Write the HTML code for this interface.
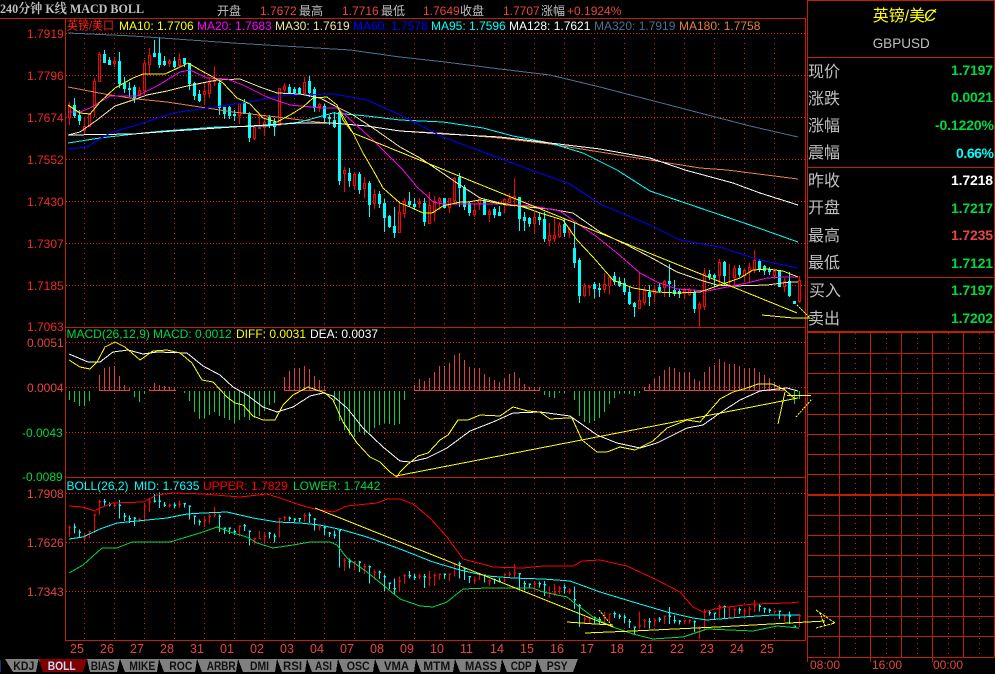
<!DOCTYPE html>
<html lang="zh">
<head>
<meta charset="utf-8">
<title>GBPUSD</title>
<style>
html,body{margin:0;padding:0;background:#000;width:995px;height:674px;overflow:hidden}
svg{display:block}
text{font-family:"Liberation Sans","Noto Sans CJK SC",sans-serif;font-size:12px}
.l{fill:none;stroke-width:1}
.cn{font-size:16px;fill:#c0c0c0;font-family:"Noto Sans CJK SC","WenQuanYi Zen Hei",sans-serif}
.v{font-size:14px;font-weight:bold}
.r{fill:#e84444}
.g{fill:#c0c0c0}
.gr{fill:#00d840}
.t{font-weight:bold;fill:#101010}
.ax{fill:#e84444;font-size:12.5px}
</style>
</head>
<body>
<svg width="995" height="674" viewBox="0 0 995 674" shape-rendering="crispEdges">
<defs>
<path id="rw" vector-effect="non-scaling-stroke" d="M69.5 102V125M84.5 117V133M89.5 113V127M94.5 78V117M99.5 52V81M114.5 57V67M139.5 87V95M144.5 60V95M149.5 48V75M169.5 59V67M179.5 53V67M204.5 83V105M209.5 78V98M214.5 66V86M239.5 103V124M254.5 126V140M259.5 113V128M264.5 115V136M279.5 88V126M284.5 83V93M304.5 77V95M319.5 103V112M344.5 167V192M354.5 172V190M364.5 177V198M374.5 189V209M399.5 203V233M404.5 198V218M419.5 198V208M429.5 192V223M434.5 196V222M439.5 197V210M449.5 198V213M454.5 177V203M474.5 203V217M479.5 199V210M489.5 209V222M504.5 198V214M509.5 193V203M514.5 178V207M534.5 212V233M549.5 223V246M554.5 217V242M559.5 222V238M569.5 227V238M584.5 283V297M589.5 285V296M604.5 273V293M609.5 277V295M639.5 272V308M644.5 287V305M654.5 285V302M664.5 280V297M684.5 289V298M689.5 288V296M699.5 302V327M704.5 268V310M719.5 259V285M729.5 264V285M734.5 265V285M744.5 268V282M749.5 263V282M754.5 250V273M774.5 270V277M784.5 278V292M799.5 276V303"/>
<path id="rb" vector-effect="non-scaling-stroke" d="M68.5 106.5h2V117.5h-2zM83.5 126.5h2V130.5h-2zM88.5 114.5h2V126.5h-2zM93.5 81.5h2V107.5h-2zM98.5 54.5h2V81.5h-2zM113.5 61.5h2V63.5h-2zM138.5 90.5h2V95.5h-2zM143.5 63.5h2V90.5h-2zM148.5 55.5h2V64.5h-2zM168.5 61.5h2V63.5h-2zM178.5 59.5h2V65.5h-2zM203.5 91.5h2V94.5h-2zM208.5 83.5h2V93.5h-2zM213.5 80.5h2V81.5h-2zM238.5 103.5h2V115.5h-2zM253.5 127.5h2V138.5h-2zM258.5 127.5h2V128.5h-2zM263.5 122.5h2V127.5h-2zM278.5 88.5h2V125.5h-2zM283.5 86.5h2V89.5h-2zM303.5 82.5h2V93.5h-2zM318.5 104.5h2V106.5h-2zM343.5 170.5h2V173.5h-2zM353.5 174.5h2V185.5h-2zM363.5 183.5h2V188.5h-2zM373.5 194.5h2V203.5h-2zM398.5 212.5h2V232.5h-2zM403.5 201.5h2V213.5h-2zM418.5 202.5h2V203.5h-2zM428.5 205.5h2V223.5h-2zM433.5 201.5h2V212.5h-2zM438.5 198.5h2V201.5h-2zM448.5 198.5h2V207.5h-2zM453.5 178.5h2V200.5h-2zM473.5 210.5h2V214.5h-2zM478.5 199.5h2V203.5h-2zM488.5 211.5h2V214.5h-2zM503.5 199.5h2V204.5h-2zM508.5 198.5h2V202.5h-2zM513.5 196.5h2V198.5h-2zM533.5 217.5h2V223.5h-2zM548.5 235.5h2V240.5h-2zM553.5 235.5h2V238.5h-2zM558.5 225.5h2V236.5h-2zM568.5 229.5h2V232.5h-2zM583.5 286.5h2V295.5h-2zM588.5 286.5h2V287.5h-2zM603.5 284.5h2V289.5h-2zM608.5 277.5h2V285.5h-2zM638.5 300.5h2V308.5h-2zM643.5 290.5h2V302.5h-2zM653.5 289.5h2V293.5h-2zM663.5 281.5h2V287.5h-2zM683.5 290.5h2V293.5h-2zM688.5 289.5h2V294.5h-2zM698.5 304.5h2V308.5h-2zM703.5 273.5h2V306.5h-2zM718.5 262.5h2V275.5h-2zM728.5 285.5h2V286.5h-2zM733.5 268.5h2V277.5h-2zM743.5 270.5h2V275.5h-2zM748.5 267.5h2V271.5h-2zM753.5 260.5h2V269.5h-2zM773.5 271.5h2V275.5h-2zM783.5 281.5h2V286.5h-2zM798.5 280.5h2V301.5h-2z"/>
<path id="cw" vector-effect="non-scaling-stroke" d="M74.5 98V118M79.5 110V125M104.5 50V63M109.5 57V65M119.5 52V88M124.5 77V93M129.5 82V97M134.5 85V103M154.5 40V57M159.5 37V68M164.5 56V66M174.5 57V68M184.5 58V67M189.5 63V90M194.5 82V100M199.5 90V102M219.5 80V115M224.5 107V119M229.5 106V119M234.5 110V121M244.5 99V113M249.5 112V142M269.5 115V128M274.5 118V136M289.5 84V93M294.5 87V95M299.5 87V95M309.5 76V97M314.5 87V112M324.5 104V122M329.5 115V125M334.5 112V128M339.5 111V185M349.5 168V187M359.5 172V194M369.5 181V217M379.5 191V208M384.5 199V232M389.5 215V228M394.5 207V238M409.5 192V207M414.5 198V210M424.5 198V226M444.5 198V208M459.5 173V207M464.5 185V210M469.5 202V216M484.5 199V215M494.5 207V218M499.5 206V215M519.5 197V231M524.5 212V231M529.5 217V227M539.5 213V225M544.5 212V242M564.5 219V237M574.5 223V268M579.5 258V303M594.5 282V298M599.5 283V297M614.5 272V285M619.5 277V287M624.5 278V295M629.5 287V305M634.5 302V317M649.5 285V306M659.5 283V293M669.5 264V297M674.5 280V296M679.5 289V298M694.5 290V313M709.5 270V280M714.5 274V287M724.5 261V285M739.5 265V277M759.5 259V272M764.5 265V275M769.5 267V275M779.5 270V287M789.5 272V297"/>
<path id="cb" vector-effect="non-scaling-stroke" d="M73.5 105.5h2V115.5h-2zM78.5 115.5h2V120.5h-2zM103.5 54.5h2V62.5h-2zM108.5 60.5h2V64.5h-2zM118.5 61.5h2V83.5h-2zM123.5 83.5h2V88.5h-2zM128.5 88.5h2V89.5h-2zM133.5 87.5h2V97.5h-2zM153.5 53.5h2V56.5h-2zM158.5 53.5h2V64.5h-2zM163.5 61.5h2V64.5h-2zM173.5 61.5h2V66.5h-2zM183.5 58.5h2V63.5h-2zM188.5 63.5h2V83.5h-2zM193.5 83.5h2V95.5h-2zM198.5 94.5h2V100.5h-2zM218.5 83.5h2V107.5h-2zM223.5 107.5h2V113.5h-2zM228.5 107.5h2V115.5h-2zM233.5 114.5h2V115.5h-2zM243.5 102.5h2V113.5h-2zM248.5 113.5h2V137.5h-2zM268.5 117.5h2V124.5h-2zM273.5 122.5h2V126.5h-2zM288.5 87.5h2V92.5h-2zM293.5 89.5h2V92.5h-2zM298.5 88.5h2V93.5h-2zM308.5 81.5h2V92.5h-2zM313.5 89.5h2V107.5h-2zM323.5 106.5h2V117.5h-2zM328.5 117.5h2V118.5h-2zM333.5 120.5h2V126.5h-2zM338.5 112.5h2V180.5h-2zM348.5 173.5h2V180.5h-2zM358.5 174.5h2V189.5h-2zM368.5 183.5h2V204.5h-2zM378.5 194.5h2V203.5h-2zM383.5 203.5h2V217.5h-2zM388.5 216.5h2V226.5h-2zM393.5 226.5h2V232.5h-2zM408.5 201.5h2V204.5h-2zM413.5 204.5h2V206.5h-2zM423.5 203.5h2V221.5h-2zM443.5 198.5h2V207.5h-2zM458.5 177.5h2V187.5h-2zM463.5 187.5h2V206.5h-2zM468.5 203.5h2V212.5h-2zM483.5 200.5h2V214.5h-2zM493.5 209.5h2V214.5h-2zM498.5 212.5h2V215.5h-2zM518.5 197.5h2V218.5h-2zM523.5 217.5h2V220.5h-2zM528.5 218.5h2V223.5h-2zM538.5 217.5h2V219.5h-2zM543.5 219.5h2V238.5h-2zM563.5 224.5h2V232.5h-2zM573.5 248.5h2V262.5h-2zM578.5 260.5h2V295.5h-2zM593.5 284.5h2V288.5h-2zM598.5 288.5h2V289.5h-2zM613.5 276.5h2V281.5h-2zM618.5 281.5h2V285.5h-2zM623.5 283.5h2V291.5h-2zM628.5 292.5h2V303.5h-2zM633.5 303.5h2V306.5h-2zM648.5 292.5h2V296.5h-2zM658.5 287.5h2V290.5h-2zM668.5 281.5h2V283.5h-2zM673.5 290.5h2V293.5h-2zM678.5 291.5h2V293.5h-2zM693.5 292.5h2V308.5h-2zM708.5 274.5h2V276.5h-2zM713.5 275.5h2V277.5h-2zM723.5 262.5h2V275.5h-2zM738.5 268.5h2V274.5h-2zM758.5 261.5h2V268.5h-2zM763.5 266.5h2V270.5h-2zM768.5 269.5h2V271.5h-2zM778.5 271.5h2V286.5h-2zM788.5 281.5h2V295.5h-2zM793.5 301.5h2V303.5h-2z"/>
</defs>

<!-- grid -->
<path fill="none" stroke="#dc2410" stroke-dasharray="1 4" d="M84.5 33V640M114.5 33V640M144.5 33V640M174.5 33V640M204.5 33V640M234.5 33V640M264.5 33V640M294.5 33V640M324.5 33V640M354.5 33V640M384.5 33V640M414.5 33V640M444.5 33V640M474.5 33V640M504.5 33V640M534.5 33V640M564.5 33V640M594.5 33V640M624.5 33V640M654.5 33V640M684.5 33V640M714.5 33V640M744.5 33V640M774.5 33V640"/>
<path fill="none" stroke="#dc2410" stroke-dasharray="1 2" d="M66 33.5H805M66 75.5H805M66 117.5H805M66 159.5H805M66 201.5H805M66 243.5H805M66 285.5H805M66 342.5H805M66 387.5H805M66 432.5H805M66 493.5H805M66 542.5H805M66 591.5H805"/>
<path fill="none" stroke="#dc2410" stroke-dasharray="1 4" d="M824.5 333V657M855.5 333V657M886.5 333V657M917.5 333V657M948.5 333V657M979.5 333V657"/>

<!-- frames -->
<g fill="none" stroke="#c02000">
<path d="M0 18.5H806M65.5 18V640.5M65 327.5H806M65 477.5H806M65 640.5H806M805.5 18V641"/>
<path d="M807.5 0V657.5M807 .5H995M994.5 0V657.5M808 57.5H994M808 167.5H994M808 277.5H994"/>
<path d="M839.5 333V657M870.5 333V662M901.5 333V657M932.5 333V662M963.5 333V657M807.5 657V662"/>
<path d="M808 353.5H994M808 373.5H994M808 393.5H994M808 414.5H994M808 434.5H994M808 454.5H994M808 474.5H994M808 515.5H994M808 535.5H994M808 555.5H994M808 576.5H994M808 596.5H994M808 616.5H994M808 636.5H994M808 657.5H994"/>
<path stroke-width="2" d="M808 332H994M808 495H994"/>
</g>

<!-- candles main -->
<use href="#rw" fill="none" stroke="#ff0000"/>
<use href="#cw" fill="none" stroke="#00ffff"/>
<use href="#rb" fill="#000" stroke="#ff0000"/>
<use href="#cb" fill="#00ffff" stroke="#00ffff"/>

<!-- MAs -->
<g class="l">
<polyline stroke="#4f6f90" points="68,33 133,36 233,43 300,47 350,50 400,57 445,62 500,69 550,75 600,87 650,100 700,113 750,126 798,137"/>
<polyline stroke="#e88040" points="68,87 110,95 137,99 167,102 200,107 233,112 277,117 317,122 367,126 400,131 440,133 500,138 550,144 600,152 650,160 700,168 727,170 798,179"/>
<polyline stroke="#00ffff" points="68,143 100,138 143,133 163,131 217,127 267,126 300,122 333,113 367,116 400,120 443,122 483,128 513,136 550,143 583,153 617,170 650,191 700,208 750,225 798,242"/>
<polyline stroke="#ffffff" points="68,135 133,134 173,131 233,127 300,123 333,123 367,126 400,131 445,134 500,137 550,143 600,149 650,158 685,170 733,183 760,193 798,205"/>
<polyline stroke="#0000ff" points="68,149 87,147 110,133 143,123 173,113 207,108 243,103 287,95 333,94 367,100 400,115 443,137 531,170 570,184 600,204 650,225 680,240 720,247 760,260 798,268"/>
<polyline stroke="#f0e8a0" points="68,135 80,132 97,120 115,106 133,100 147,95 167,91 187,86 217,80 240,79 260,87 277,93 300,94 320,98 337,107 353,115 373,128 400,147 420,158 438,170 457,183 480,198 500,203 527,207 550,209 573,213 600,232 627,245 650,257 677,272 700,280 717,285 733,286 767,285 790,282 798,282"/>
<polyline stroke="#ff00ff" points="68,112 80,112 90,108 110,96 137,96 157,86 180,72 190,70 207,78 227,79 243,85 267,97 290,105 323,108 337,108 353,122 373,140 403,170 417,187 427,196 433,202 443,204 467,204 500,204 533,206 560,211 577,223 597,237 617,253 640,273 657,282 677,289 693,290 707,291 727,287 747,283 767,278 783,277 798,277"/>
<polyline stroke="#ffff00" points="68,105 80,113 90,114 100,102 115,88 133,78 143,74 165,74 180,67 188,63 200,70 213,77 223,83 237,98 250,104 263,118 277,122 290,115 303,107 313,98 327,97 337,105 343,120 353,133 363,153 373,170 383,188 400,203 410,207 423,213 432,213 443,206 460,202 468,202 480,200 497,203 507,205 520,206 532,210 540,213 563,220 577,240 593,257 613,280 633,288 657,292 677,293 700,292 720,285 740,278 753,270 767,269 783,271 798,277"/>
<polyline stroke="#ffff00" points="338,108 353,133 797,313"/>
<polyline stroke="#ffff00" points="762,315 793,318 810,318"/>
<polyline stroke="#ffff00" stroke-dasharray="2 1" points="797,305 810,318"/>
</g>

<!-- MACD hist -->
<path fill="none" stroke="#e04040" d="M99.5 390V375M104.5 390V368M109.5 390V367M114.5 390V366M119.5 390V376M124.5 390V385M129.5 390V388M149.5 390V389M154.5 390V383M159.5 390V385M164.5 390V386M169.5 390V387M174.5 390V388M284.5 390V377M289.5 390V371M294.5 390V368M299.5 390V368M304.5 390V366M309.5 390V369M314.5 390V376M319.5 390V380M324.5 390V386M414.5 390V385M419.5 390V379M424.5 390V381M429.5 390V378M434.5 390V372M439.5 390V366M444.5 390V366M449.5 390V363M454.5 390V355M459.5 390V353M464.5 390V360M469.5 390V367M474.5 390V368M479.5 390V368M484.5 390V374M489.5 390V377M494.5 390V380M499.5 390V382M504.5 390V378M509.5 390V374M514.5 390V372M519.5 390V378M524.5 390V384M529.5 390V387M534.5 390V387M539.5 390V387M644.5 390V387M649.5 390V384M654.5 390V378M659.5 390V376M664.5 390V370M669.5 390V367M674.5 390V368M679.5 390V372M684.5 390V372M689.5 390V372M694.5 390V379M699.5 390V381M704.5 390V372M709.5 390V367M714.5 390V365M719.5 390V359M724.5 390V362M729.5 390V364M734.5 390V364M739.5 390V366M744.5 390V368M749.5 390V368M754.5 390V368M759.5 390V372M764.5 390V375M769.5 390V378M774.5 390V382M779.5 390V385M784.5 390V387M99 390.5H130M149 390.5H176M284 390.5H326M414 390.5H540M644 390.5H786"/>
<path fill="none" stroke="#00d840" d="M69.5 391V400M74.5 391V402M79.5 391V406M84.5 391V406M89.5 391V401M134.5 391V397M139.5 391V402M144.5 391V394M184.5 391V393M189.5 391V401M194.5 391V412M199.5 391V419M204.5 391V418M209.5 391V415M214.5 391V412M219.5 391V416M224.5 391V418M229.5 391V420M234.5 391V423M239.5 391V420M244.5 391V417M249.5 391V420M254.5 391V418M259.5 391V416M264.5 391V411M269.5 391V405M274.5 391V403M334.5 391V401M339.5 391V421M344.5 391V430M349.5 391V435M354.5 391V437M359.5 391V432M364.5 391V435M369.5 391V433M374.5 391V428M379.5 391V425M384.5 391V423M389.5 391V424M394.5 391V425M399.5 391V424M404.5 391V400M544.5 391V395M549.5 391V397M554.5 391V398M559.5 391V393M564.5 391V393M574.5 391V400M579.5 391V416M584.5 391V422M589.5 391V423M594.5 391V421M599.5 391V418M604.5 391V412M609.5 391V404M614.5 391V398M619.5 391V394M624.5 391V393M629.5 391V394M634.5 391V396M639.5 391V393M794.5 391V404M799.5 391V399"/>
<g class="l">
<polyline stroke="#ffffff" points="69,354 88,362 100,362 113,352 128,350 143,354 157,352 187,353 203,366 220,375 233,387 247,395 263,407 277,412 293,407 310,396 323,393 333,396 347,408 363,428 383,447 400,461 410,462 427,458 447,448 470,431 493,422 513,413 540,412 570,416 597,435 617,443 640,448 657,443 687,428 703,425 720,413 740,400 760,391 787,388 798,391"/>
<polyline stroke="#ffff00" points="69,360 80,367 90,369 97,362 105,347 115,342 125,347 140,360 153,351 167,350 180,353 192,363 202,380 213,382 227,397 235,403 243,405 253,416 263,420 275,420 283,405 293,395 308,387 325,393 333,400 343,422 357,443 370,457 380,462 390,472 397,477 400,472 407,465 418,456 428,453 440,440 448,435 458,420 468,420 480,415 500,416 513,407 528,411 540,412 550,419 567,418 572,418 582,440 597,452 607,452 620,447 635,450 653,441 667,428 687,420 700,422 720,399 733,392 747,388 758,384 772,384 785,390 795,399"/>
<polyline stroke="#ffff00" points="396,476 798,398"/>
<polyline stroke="#ffff00" points="778,424 785,392"/>
<polyline stroke="#ffff00" points="787,395.5 811,395.5"/>
<polyline stroke="#ffff00" stroke-dasharray="2 1" points="796,417 812,399"/>
</g>

<!-- BOLL -->
<g transform="translate(0 473.9) scale(1 .505)">
<use href="#rw" fill="none" stroke="#ff0000"/>
<use href="#cw" fill="none" stroke="#00ffff"/>
<use href="#rb" fill="none" stroke="#ff0000" stroke-dasharray="3 4000"/>
<use href="#cb" fill="none" stroke="#00ffff" stroke-dasharray="3 4000"/>
</g>
<g class="l">
<polyline stroke="#ff0000" points="69,506 83,507 95,511 100,508 113,503 143,502 157,495 173,493 203,494 240,497 267,494 280,498 300,505 315,509 333,512 347,506 377,503 387,499 400,499 413,504 430,518 447,537 463,559 493,567 523,568 543,566 573,566 582,561 600,560 627,566 657,580 680,592 693,607 703,612 720,608 753,604 790,603 799,602"/>
<polyline stroke="#00ffff" points="69,539 83,537 100,529 117,523 137,521 167,518 187,514 203,513 227,512 253,518 277,522 300,523 320,525 343,530 367,537 400,549 433,562 460,570 487,576 513,578 543,579 570,581 600,592 633,602 667,612 693,618 707,620 743,617 773,615 799,615"/>
<polyline stroke="#00d840" points="69,573 83,565 102,548 117,548 132,542 147,542 170,542 190,536 200,533 217,527 233,533 247,537 257,543 273,548 293,545 310,542 330,542 337,545 347,558 367,572 383,585 400,599 420,606 433,607 447,602 463,589 487,588 533,588 543,592 567,597 577,605 593,617 613,627 633,634 653,639 683,637 707,629 753,631 777,626 799,628"/>
<polyline stroke="#ffff00" points="315,508 613,627"/>
<polyline stroke="#ffff00" points="567,622 595,624 613,625"/>
<polyline stroke="#ffff00" stroke-dasharray="2 1" points="599,610 613,627"/>
<polyline stroke="#ffff00" points="585,633 633,631 717,627 825,621"/>
<polyline stroke="#ffff00" stroke-dasharray="3 1" points="816,610 835,623 816,628"/>
<polyline stroke="#ffff00" stroke-dasharray="2 1" points="820,613 825,626"/>
</g>

<!-- tabs -->
<polygon fill="#808080" points="5,659 578,659 573,672 13,672"/>
<polygon fill="#000" points="38.5,659 36,672 44,672"/>
<polygon fill="#800000" points="39,659 87,659 83,672 43,672"/>
<polygon fill="#000" points="120,659 117,672 125,672"/>
<polygon fill="#000" points="87,659 83,672 90,672"/>
<polygon fill="#000" points="159,659 157,672 164,672"/>
<polygon fill="#000" points="197,659 195,672 202,672"/>
<polygon fill="#000" points="238,659 236,672 243,672"/>
<polygon fill="#000" points="277,659 275,672 282,672"/>
<polygon fill="#000" points="307,659 305,672 312,672"/>
<polygon fill="#000" points="338,659 336,672 343,672"/>
<polygon fill="#000" points="375,659 373,672 380,672"/>
<polygon fill="#000" points="416,659 414,672 421,672"/>
<polygon fill="#000" points="455,659 453,672 460,672"/>
<polygon fill="#000" points="502,659 500,672 507,672"/>
<polygon fill="#000" points="537,659 535,672 542,672"/>
<rect x="0" y="660" width="1" height="12" fill="#203060"/>
<text class="t" x="13.3" y="670" textLength="21" lengthAdjust="spacingAndGlyphs">KDJ</text>
<text class="t" x="47.7" y="670" textLength="28" lengthAdjust="spacingAndGlyphs" style="fill:#c4dcff">BOLL</text>
<text class="t" x="90.7" y="670" textLength="24" lengthAdjust="spacingAndGlyphs">BIAS</text>
<text class="t" x="129.3" y="670" textLength="26" lengthAdjust="spacingAndGlyphs">MIKE</text>
<text class="t" x="169.3" y="670" textLength="23" lengthAdjust="spacingAndGlyphs">ROC</text>
<text class="t" x="206.7" y="670" textLength="29" lengthAdjust="spacingAndGlyphs">ARBR</text>
<text class="t" x="250" y="670" textLength="19" lengthAdjust="spacingAndGlyphs">DMI</text>
<text class="t" x="283" y="670" textLength="19" lengthAdjust="spacingAndGlyphs">RSI</text>
<text class="t" x="315" y="670" textLength="17" lengthAdjust="spacingAndGlyphs">ASI</text>
<text class="t" x="346.7" y="670" textLength="23" lengthAdjust="spacingAndGlyphs">OSC</text>
<text class="t" x="384" y="670" textLength="25" lengthAdjust="spacingAndGlyphs">VMA</text>
<text class="t" x="423.3" y="670" textLength="27" lengthAdjust="spacingAndGlyphs">MTM</text>
<text class="t" x="465" y="670" textLength="32" lengthAdjust="spacingAndGlyphs">MASS</text>
<text class="t" x="510.7" y="670" textLength="21" lengthAdjust="spacingAndGlyphs">CDP</text>
<text class="t" x="546.7" y="670" textLength="21" lengthAdjust="spacingAndGlyphs">PSY</text>

<!-- top title -->
<text x="0" y="13" textLength="144" lengthAdjust="spacingAndGlyphs" style="font:bold 13px 'Liberation Serif','Noto Serif CJK SC',serif;fill:#c0c0c0">240分钟 K线 MACD BOLL</text>
<text class="g" x="217" y="15">开盘</text><text class="r" x="260" y="15">1.7672</text>
<text class="g" x="299" y="15">最高</text><text class="r" x="342" y="15">1.7716</text>
<text class="g" x="381" y="15">最低</text><text class="r" x="423" y="15">1.7649</text>
<text class="g" x="460" y="15">收盘</text><text class="r" x="503" y="15">1.7707</text>
<text class="g" x="541" y="15">涨幅</text><text class="r" x="567" y="15">+0.1924%</text>

<!-- MA header -->
<text x="67" y="29.5" textLength="47" lengthAdjust="spacingAndGlyphs" style="fill:#ff2020">英镑/美口</text>
<text x="119" y="30" fill="#ffff00">MA10: 1.7706</text>
<text x="197" y="30" fill="#ff00ff">MA20: 1.7683</text>
<text x="275" y="30" fill="#f0e8a0">MA30: 1.7619</text>
<text x="353" y="30" fill="#0000ff">MA60: 1.7578</text>
<text x="431" y="30" fill="#00ffff">MA95: 1.7596</text>
<text x="509" y="30" fill="#ffffff">MA128: 1.7621</text>
<text x="594" y="30" fill="#4f6f90">MA320: 1.7919</text>
<text x="679" y="30" fill="#e88040">MA180: 1.7758</text>

<!-- MACD header -->
<text x="66.5" y="338" class="gr">MACD(26,12,9)</text>
<text x="153" y="338" class="gr">MACD: 0.0012</text>
<text x="236" y="338" fill="#ffff00">DIFF: 0.0031</text>
<text x="310" y="338" fill="#ffffff">DEA: 0.0037</text>

<!-- BOLL header -->
<text x="66.5" y="490" fill="#00ffff">BOLL(26,2)</text>
<text x="134" y="490" fill="#00ffff">MID: 1.7635</text>
<text x="203" y="490" fill="#ff0000">UPPER: 1.7829</text>
<text x="293" y="490" class="gr">LOWER: 1.7442</text>

<!-- left axis -->
<g fill="#f02828">
<text x="27" y="38">1.7919</text><text x="27" y="80">1.7796</text><text x="27" y="122">1.7674</text><text x="27" y="164">1.7552</text><text x="27" y="206">1.7430</text><text x="27" y="248">1.7307</text><text x="27" y="290">1.7185</text><text x="27" y="331">1.7063</text>
</g>
<text class="r" x="27" y="347">0.0051</text><text class="r" x="27" y="392">0.0004</text>
<text class="gr" x="22" y="437">-0.0043</text><text class="gr" x="22" y="481">-0.0089</text>
<text class="r" x="27" y="498">1.7908</text><text class="r" x="27" y="547">1.7626</text><text class="r" x="27" y="596">1.7343</text>

<!-- dates -->
<text class="ax" x="70" y="653">25</text><text class="ax" x="100" y="653">26</text><text class="ax" x="130" y="653">27</text><text class="ax" x="160" y="653">28</text><text class="ax" x="190" y="653">31</text><text class="ax" x="220" y="653">01</text><text class="ax" x="250" y="653">02</text><text class="ax" x="280" y="653">03</text><text class="ax" x="310" y="653">04</text><text class="ax" x="340" y="653">07</text><text class="ax" x="370" y="653">08</text><text class="ax" x="400" y="653">09</text><text class="ax" x="430" y="653">10</text><text class="ax" x="460" y="653">11</text><text class="ax" x="490" y="653">14</text><text class="ax" x="520" y="653">15</text><text class="ax" x="550" y="653">16</text><text class="ax" x="580" y="653">17</text><text class="ax" x="610" y="653">18</text><text class="ax" x="640" y="653">21</text><text class="ax" x="670" y="653">22</text><text class="ax" x="700" y="653">23</text><text class="ax" x="730" y="653">24</text><text class="ax" x="760" y="653">25</text>
<text class="r" x="810" y="669">08:00</text><text class="r" x="872" y="669">16:00</text><text class="r" x="933" y="669">00:00</text>

<!-- right panel -->
<text x="872.7" y="21" style="font-size:16px;fill:#ffff00">英镑/美</text>
<text x="924" y="21" style="font-size:17px;font-style:italic;fill:#ffff00">Ȼ</text>
<text x="872.7" y="48" textLength="57" lengthAdjust="spacingAndGlyphs" style="font-size:14px;fill:#c0c0c0">GBPUSD</text>

<text class="cn" x="808" y="77">现价</text>
<text class="cn" x="808" y="104">涨跌</text>
<text class="cn" x="808" y="131">涨幅</text>
<text class="cn" x="808" y="158">震幅</text>
<text class="cn" x="808" y="186">昨收</text>
<text class="cn" x="808" y="213">开盘</text>
<text class="cn" x="808" y="241">最高</text>
<text class="cn" x="808" y="268">最低</text>
<text class="cn" x="809" y="296">买入</text>
<text class="cn" x="808" y="324">卖出</text>

<text class="v gr" x="951" y="75" textLength="42">1.7197</text>
<text class="v gr" x="951" y="102" textLength="42">0.0021</text>
<text class="v gr" x="935" y="130" textLength="59">-0.1220%</text>
<text class="v" x="956" y="158" textLength="38" fill="#00ffff">0.66%</text>
<text class="v" x="951" y="185" textLength="42" fill="#ffffff">1.7218</text>
<text class="v gr" x="951" y="213" textLength="42">1.7217</text>
<text class="v r" x="951" y="240" textLength="42">1.7235</text>
<text class="v gr" x="951" y="268" textLength="42">1.7121</text>
<text class="v gr" x="951" y="295" textLength="42">1.7197</text>
<text class="v gr" x="951" y="323" textLength="42">1.7202</text>
</svg>
</body>
</html>
